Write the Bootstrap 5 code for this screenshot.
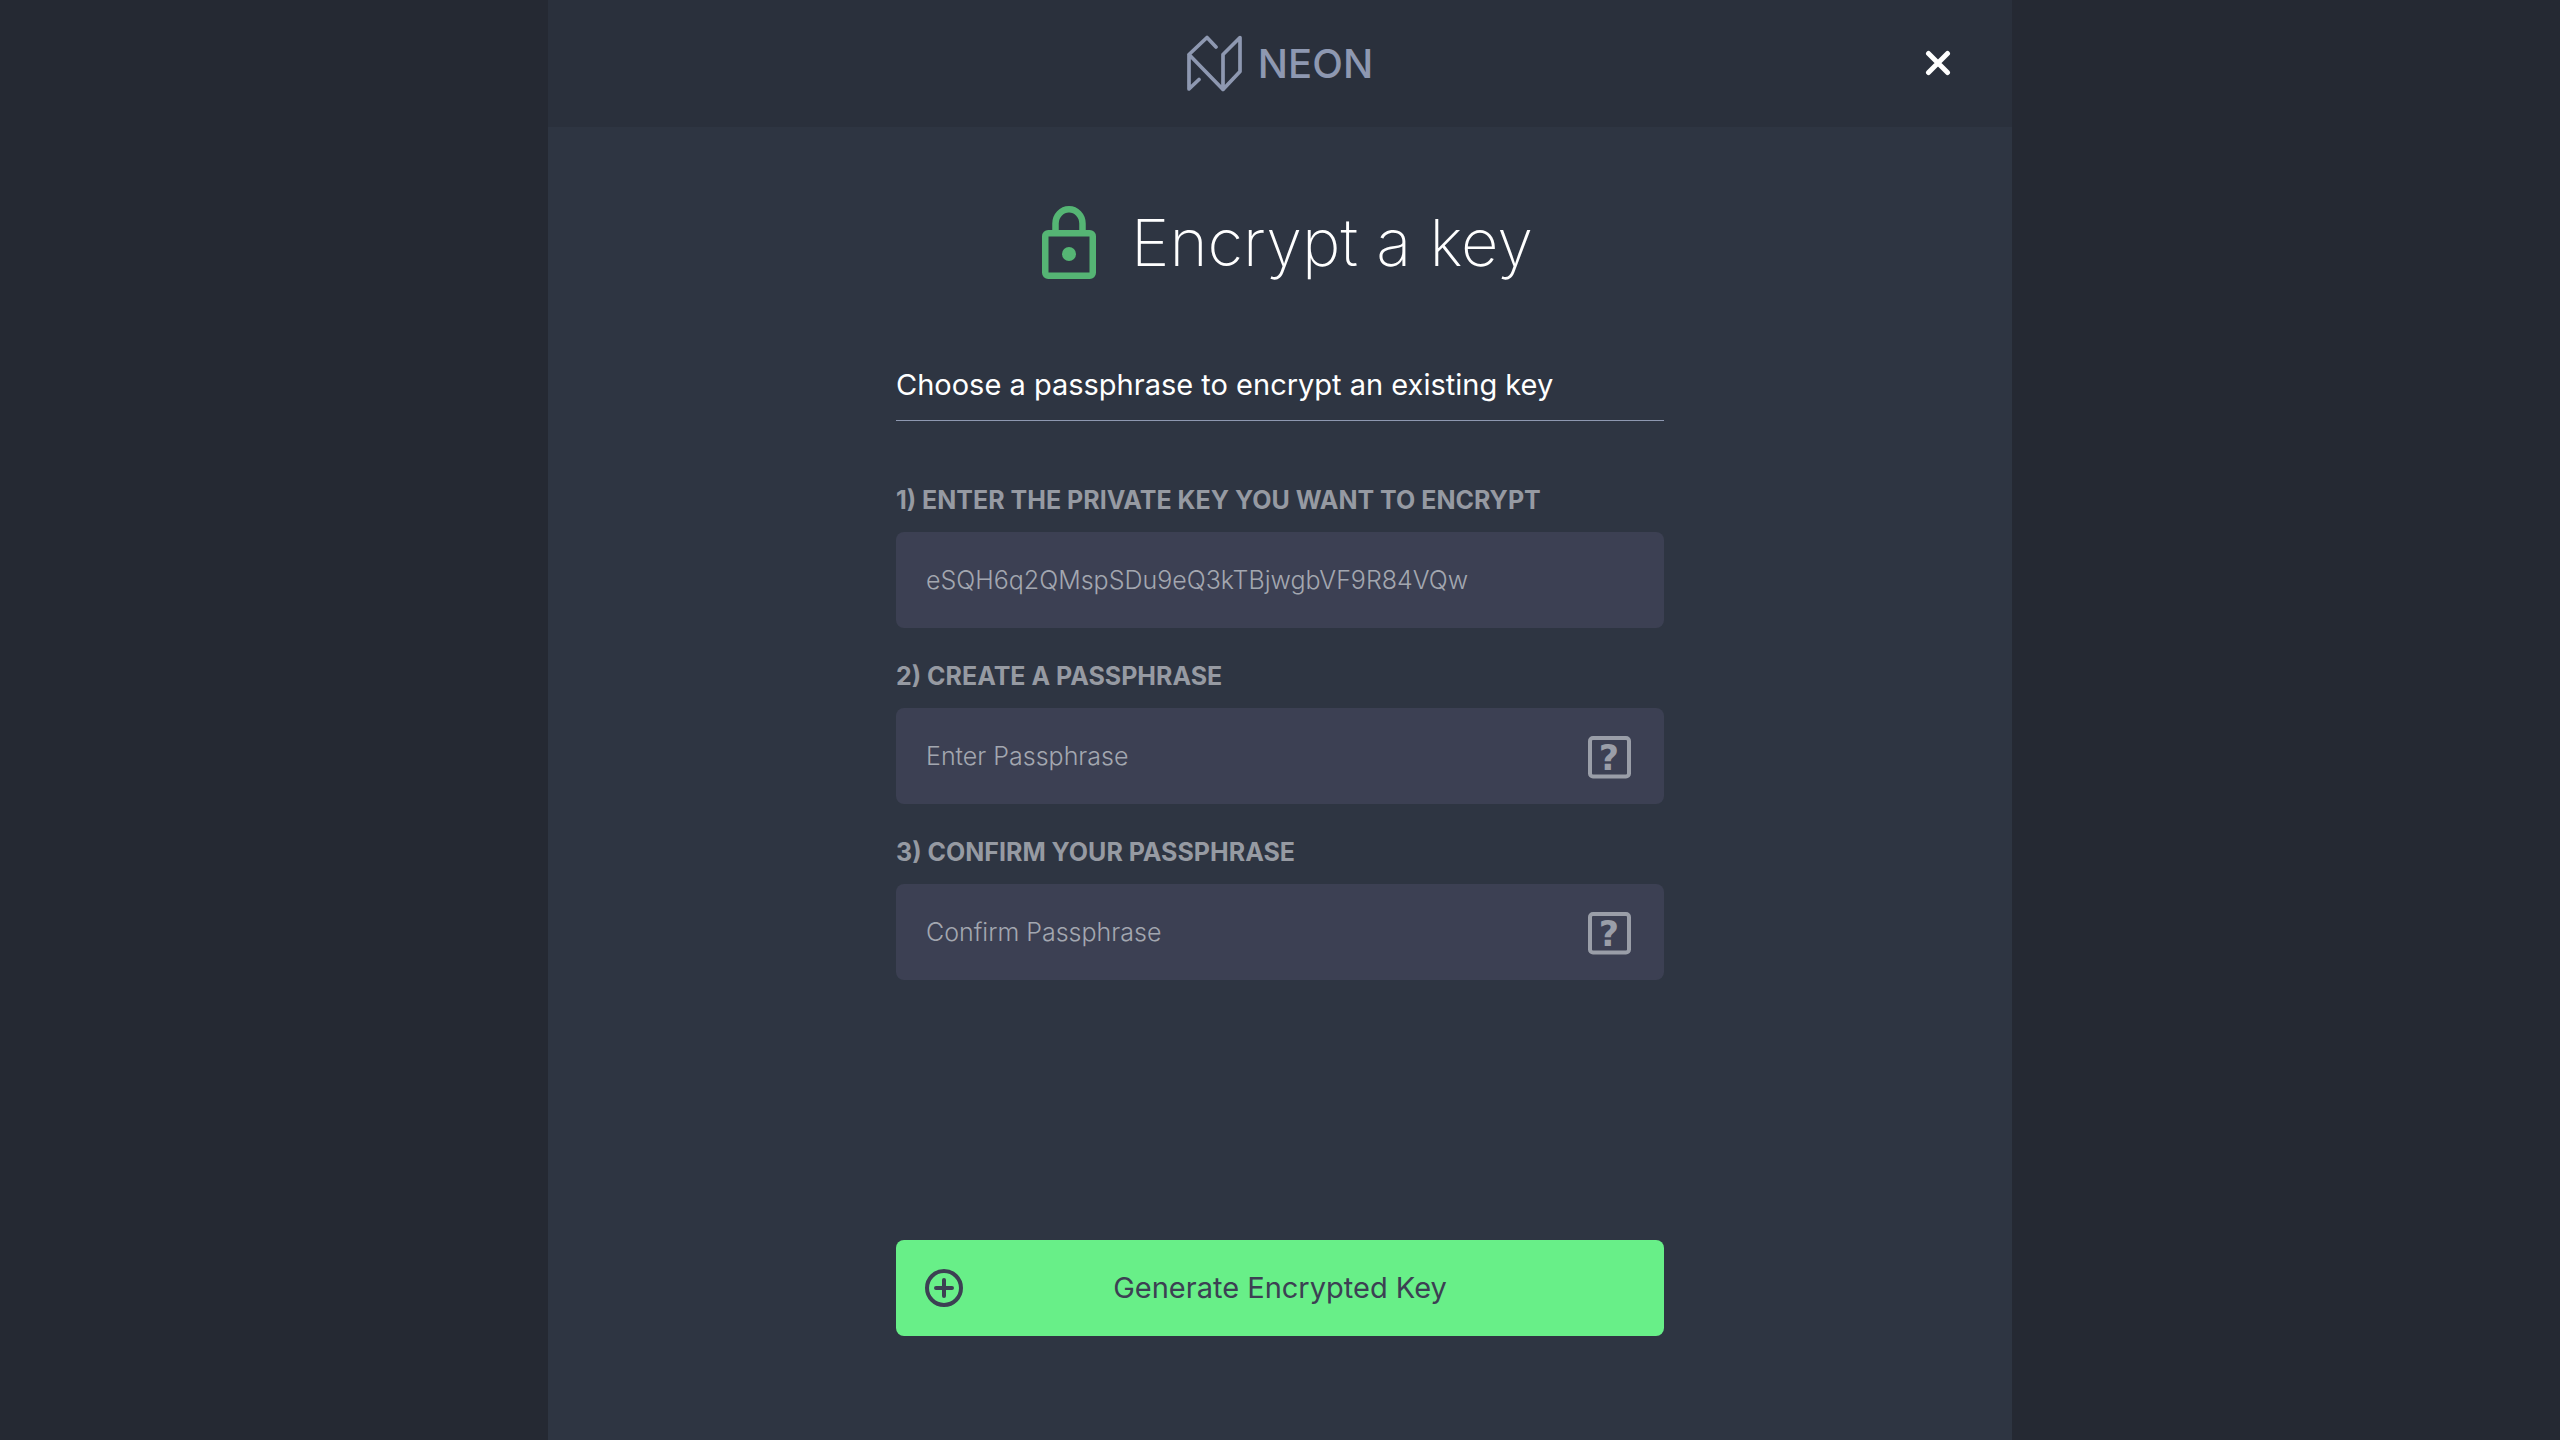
<!DOCTYPE html>
<html lang="en">
<head>
<meta charset="utf-8">
<meta name="viewport" content="width=device-width, initial-scale=1">
<title>Neon - Encrypt a key</title>
<link href="https://cdn.jsdelivr.net/npm/bootstrap@5.3.0/dist/css/bootstrap.min.css" rel="stylesheet">
<style>
body{background:#252933;color:#fff;font-family:Inter,"Liberation Sans",sans-serif}
.panel{max-width:1464px;background:#2e3542}
.topbar{display:grid;grid-template-columns:1fr auto 1fr;height:127px;padding:0 60px;background:#2a303c}
.brand{gap:16px;color:#8e98b1;font-size:40px;line-height:48px;font-weight:500}
.close-x{width:28px;height:28px;line-height:0}
.content{max-width:768px;padding-top:76px;padding-bottom:104px}
.title-row{gap:20px;height:80px;margin-bottom:84px}
.title-row h1{font-size:65px;font-weight:200;line-height:80px}
.intro{font-size:29px;line-height:36px;padding-bottom:17px;border-bottom:1px solid #8e98b1;margin-bottom:61px}
.step{margin-bottom:30px}
.step label{font-size:25px;line-height:36px;font-weight:700;color:#969aa2;margin-bottom:14px}
.field{height:96px;border-radius:8px;background:#3c4053;padding:0 33px 0 30px}
.field input,.field input:focus{background:none;border:0;box-shadow:none;color:#a3a7b0;font-size:25px;line-height:36px;font-weight:350;padding:0}
.field input::placeholder{color:#a3a7b0;opacity:1}
.help{line-height:0}
.generate,.generate:hover{display:grid;grid-template-columns:40px 1fr 40px;height:96px;margin-top:260px;padding:0 28px;border:0;border-radius:8px;background:#68ef88;color:#3c4053;font-size:29px;line-height:36px}
</style>
</head>
<body>
<div class="panel container-fluid p-0 min-vh-100">
  <header class="topbar align-items-center">
    <span></span>
    <a href="#" class="brand d-flex align-items-center text-decoration-none">
      <svg width="55" height="58" viewBox="0 0 55 58" fill="none" stroke="currentColor" stroke-width="3.700" stroke-linejoin="round" stroke-linecap="round" aria-hidden="true"><path d="M29 12 20 2.500 2 19.500V54L12 44.500M2 19.500 36 54.500 53 36.500V2.500L36 19.500V54.500"/></svg>
      <span>NEON</span>
    </a>
    <button type="button" class="close-x btn p-0 border-0 ms-auto" aria-label="Close">
      <svg width="28" height="28" viewBox="0 0 28 28" stroke="#fff" stroke-width="5" stroke-linecap="round"><path d="m4.500 3.500 19 19M23.500 3.500 4.500 22.500"/></svg>
    </button>
  </header>
  <main class="content container-fluid px-0">
    <div class="title-row d-flex align-items-center justify-content-center">
      <svg width="84" height="80" viewBox="0 0 84 80" fill="none" stroke="#55b574" stroke-width="6.500" aria-hidden="true"><rect x="18.250" y="30.250" width="47.500" height="42.500" rx="3"/><path d="M28.500 30v-9.500a13.500 14.250 0 0 1 27 0V30"/><circle cx="42" cy="51" r="7" fill="#55b574" stroke="none"/></svg>
      <h1 class="m-0">Encrypt a key</h1>
    </div>
    <p class="intro">Choose a passphrase to encrypt an existing key</p>
    <form>
      <div class="step">
        <label class="d-block" for="key">1) ENTER THE PRIVATE KEY YOU WANT TO ENCRYPT</label>
        <div class="field d-flex align-items-center"><input class="form-control" id="key" type="text" value="eSQH6q2QMspSDu9eQ3kTBjwgbVF9R84VQw"></div>
      </div>
      <div class="step">
        <label class="d-block" for="pass">2) CREATE A PASSPHRASE</label>
        <div class="field d-flex align-items-center"><input class="form-control" id="pass" type="password" placeholder="Enter Passphrase">
          <button type="button" class="help btn p-0 border-0" aria-label="Passphrase help"><svg width="43" height="46" viewBox="0 0 43 46"><rect x="2" y="5" width="39" height="38.500" rx="3" fill="none" stroke="#9a9ea8" stroke-width="4"/><text x="21" y="37" text-anchor="middle" font-family="DejaVu Sans" font-weight="700" font-size="35" fill="#9a9ea8">?</text></svg></button></div>
      </div>
      <div class="step">
        <label class="d-block" for="confirm">3) CONFIRM YOUR PASSPHRASE</label>
        <div class="field d-flex align-items-center"><input class="form-control" id="confirm" type="password" placeholder="Confirm Passphrase">
          <button type="button" class="help btn p-0 border-0" aria-label="Confirmation help"><svg width="43" height="46" viewBox="0 0 43 46"><rect x="2" y="5" width="39" height="38.500" rx="3" fill="none" stroke="#9a9ea8" stroke-width="4"/><text x="21" y="37" text-anchor="middle" font-family="DejaVu Sans" font-weight="700" font-size="35" fill="#9a9ea8">?</text></svg></button></div>
      </div>
      <button type="submit" class="generate btn w-100 align-items-center">
        <svg width="40" height="40" viewBox="0 0 40 40" fill="none" stroke="currentColor" stroke-width="4" stroke-linecap="round" aria-hidden="true"><circle cx="20" cy="20" r="17"/><path d="M20 12v16M12 20h16"/></svg>
        <span>Generate Encrypted Key</span>
      </button>
    </form>
  </main>
</div>
<script src="https://cdn.jsdelivr.net/npm/bootstrap@5.3.0/dist/js/bootstrap.bundle.min.js"></script>
</body>
</html>
